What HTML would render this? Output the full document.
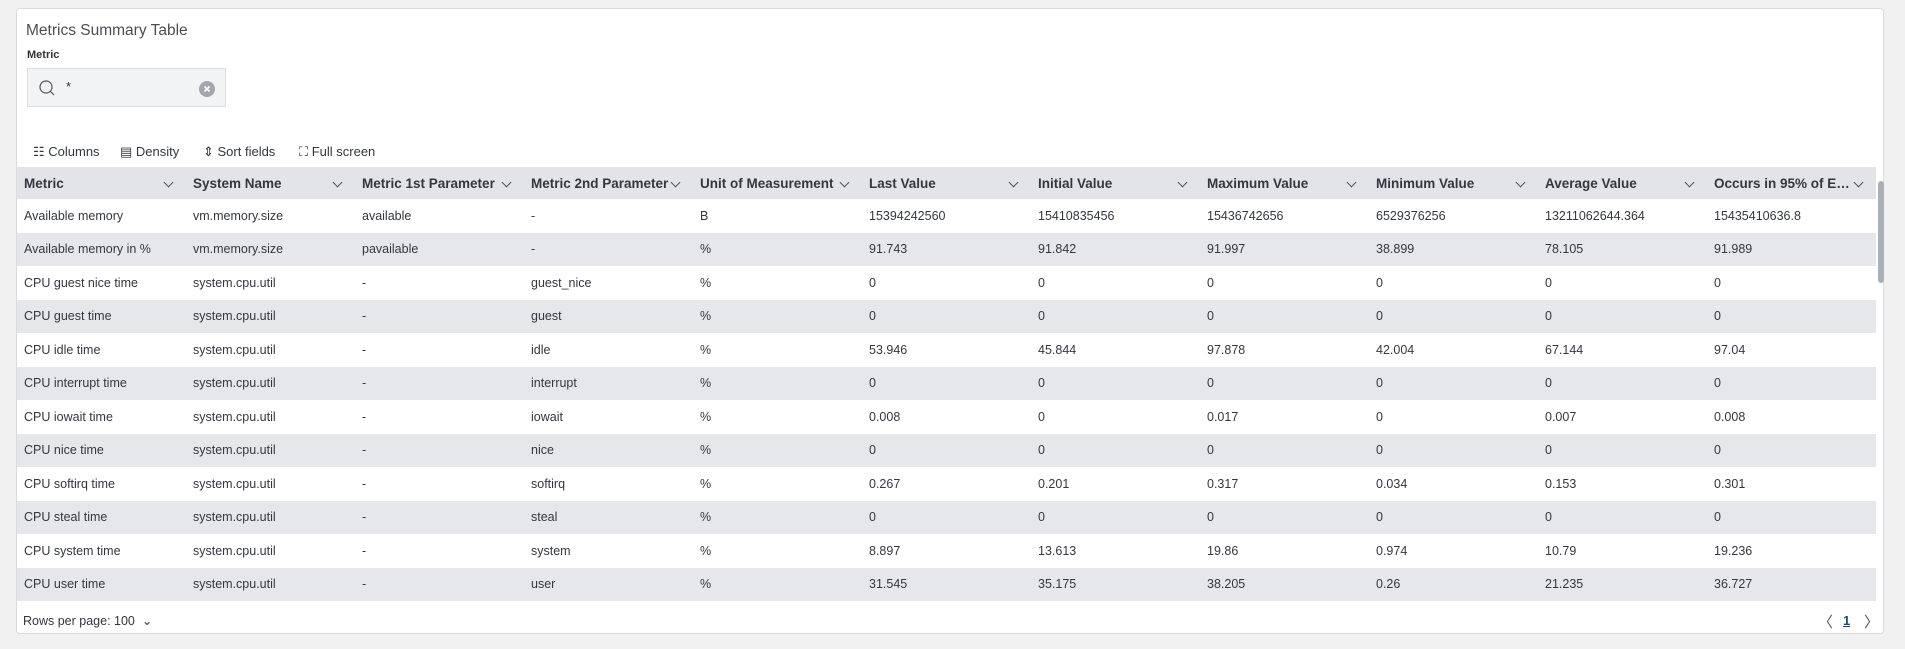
<!DOCTYPE html><html><head><style>
body{margin:0;width:1905px;height:649px;background:#f1f1f2;font-family:"Liberation Sans",sans-serif;color:#343741;overflow:hidden}
.card{position:absolute;left:16px;top:8px;width:1868px;height:626px;background:#fff;border:1px solid #d9dbe0;border-radius:4px;box-sizing:border-box}
.title{position:absolute;left:9px;top:13px;font-size:15.5px;color:#4a4d55}
.lbl{position:absolute;left:10px;top:40px;font-size:11px;font-weight:bold;color:#333}
.inp{position:absolute;left:10px;top:59px;width:199px;height:39px;background:#f2f3f5;border:1px solid #dcdde0;box-sizing:border-box}
.tb{position:absolute;top:135px;font-size:13px;color:#343741}
.tbl{position:absolute;left:0;top:158px;width:1859px}
.row{height:33.5px;display:flex;font-size:12.5px;align-items:center}
.row.h{height:32px;background:#e3e4e8;font-weight:bold;font-size:13.5px}
.row:nth-child(odd):not(.h){background:#e6e7ea}
.c{width:169px;box-sizing:border-box;padding-left:7px;position:relative;white-space:nowrap;overflow:hidden}
.h .c{padding-right:22px;text-overflow:ellipsis}
.h .c:after{content:"";position:absolute;right:14px;top:3px;width:6px;height:6px;border-right:1px solid #555;border-bottom:1px solid #555;transform:rotate(45deg)}
.sb{position:absolute;left:1861px;top:172px;width:6px;height:102px;background:#aab0b8;border-radius:3px}
.foot{position:absolute;left:6px;top:604px;font-size:12.5px}
</style></head><body><div class="card">
<div class="title">Metrics Summary Table</div>
<div class="lbl">Metric</div>
<div class="inp"><svg style="position:absolute;left:10px;top:10px" width="18" height="18"><circle cx="8" cy="8" r="6" fill="none" stroke="#555" stroke-width="1.2"/><line x1="12" y1="12" x2="16" y2="16" stroke="#555" stroke-width="1.2"/></svg><span style="position:absolute;left:38px;top:10px;font-size:13px">*</span><svg style="position:absolute;left:171px;top:12px" width="16" height="16"><circle cx="8" cy="8" r="8" fill="#a2a6ad"/><path d="M5.5 5.5l5 5M10.5 5.5l-5 5" stroke="#fff" stroke-width="1.6"/></svg></div>
<div class="tb" style="left:16px">☷ Columns</div>
<div class="tb" style="left:103px">▤ Density</div>
<div class="tb" style="left:186px">⇕ Sort fields</div>
<div class="tb" style="left:282px">⛶ Full screen</div>
<div class="tbl">
<div class="row h"><div class="c">Metric</div><div class="c">System Name</div><div class="c">Metric 1st Parameter</div><div class="c">Metric 2nd Parameter</div><div class="c">Unit of Measurement</div><div class="c">Last Value</div><div class="c">Initial Value</div><div class="c">Maximum Value</div><div class="c">Minimum Value</div><div class="c">Average Value</div><div class="c">Occurs in 95% of Events</div></div>
<div class="row"><div class="c">Available memory</div><div class="c">vm.memory.size</div><div class="c">available</div><div class="c">-</div><div class="c">B</div><div class="c">15394242560</div><div class="c">15410835456</div><div class="c">15436742656</div><div class="c">6529376256</div><div class="c">13211062644.364</div><div class="c">15435410636.8</div></div>
<div class="row"><div class="c">Available memory in %</div><div class="c">vm.memory.size</div><div class="c">pavailable</div><div class="c">-</div><div class="c">%</div><div class="c">91.743</div><div class="c">91.842</div><div class="c">91.997</div><div class="c">38.899</div><div class="c">78.105</div><div class="c">91.989</div></div>
<div class="row"><div class="c">CPU guest nice time</div><div class="c">system.cpu.util</div><div class="c">-</div><div class="c">guest_nice</div><div class="c">%</div><div class="c">0</div><div class="c">0</div><div class="c">0</div><div class="c">0</div><div class="c">0</div><div class="c">0</div></div>
<div class="row"><div class="c">CPU guest time</div><div class="c">system.cpu.util</div><div class="c">-</div><div class="c">guest</div><div class="c">%</div><div class="c">0</div><div class="c">0</div><div class="c">0</div><div class="c">0</div><div class="c">0</div><div class="c">0</div></div>
<div class="row"><div class="c">CPU idle time</div><div class="c">system.cpu.util</div><div class="c">-</div><div class="c">idle</div><div class="c">%</div><div class="c">53.946</div><div class="c">45.844</div><div class="c">97.878</div><div class="c">42.004</div><div class="c">67.144</div><div class="c">97.04</div></div>
<div class="row"><div class="c">CPU interrupt time</div><div class="c">system.cpu.util</div><div class="c">-</div><div class="c">interrupt</div><div class="c">%</div><div class="c">0</div><div class="c">0</div><div class="c">0</div><div class="c">0</div><div class="c">0</div><div class="c">0</div></div>
<div class="row"><div class="c">CPU iowait time</div><div class="c">system.cpu.util</div><div class="c">-</div><div class="c">iowait</div><div class="c">%</div><div class="c">0.008</div><div class="c">0</div><div class="c">0.017</div><div class="c">0</div><div class="c">0.007</div><div class="c">0.008</div></div>
<div class="row"><div class="c">CPU nice time</div><div class="c">system.cpu.util</div><div class="c">-</div><div class="c">nice</div><div class="c">%</div><div class="c">0</div><div class="c">0</div><div class="c">0</div><div class="c">0</div><div class="c">0</div><div class="c">0</div></div>
<div class="row"><div class="c">CPU softirq time</div><div class="c">system.cpu.util</div><div class="c">-</div><div class="c">softirq</div><div class="c">%</div><div class="c">0.267</div><div class="c">0.201</div><div class="c">0.317</div><div class="c">0.034</div><div class="c">0.153</div><div class="c">0.301</div></div>
<div class="row"><div class="c">CPU steal time</div><div class="c">system.cpu.util</div><div class="c">-</div><div class="c">steal</div><div class="c">%</div><div class="c">0</div><div class="c">0</div><div class="c">0</div><div class="c">0</div><div class="c">0</div><div class="c">0</div></div>
<div class="row"><div class="c">CPU system time</div><div class="c">system.cpu.util</div><div class="c">-</div><div class="c">system</div><div class="c">%</div><div class="c">8.897</div><div class="c">13.613</div><div class="c">19.86</div><div class="c">0.974</div><div class="c">10.79</div><div class="c">19.236</div></div>
<div class="row"><div class="c">CPU user time</div><div class="c">system.cpu.util</div><div class="c">-</div><div class="c">user</div><div class="c">%</div><div class="c">31.545</div><div class="c">35.175</div><div class="c">38.205</div><div class="c">0.26</div><div class="c">21.235</div><div class="c">36.727</div></div>
</div>
<div class="sb"></div>
<div class="foot">Rows per page: 100 &nbsp;⌄</div>
<div style="position:absolute;left:1801px;top:602px;font-size:15px;color:#555">〈</div>
<div style="position:absolute;left:1826px;top:604px;font-size:13px;color:#1a4a7a;text-decoration:underline;font-weight:bold">1</div>
<div style="position:absolute;left:1847px;top:602px;font-size:15px;color:#555">〉</div>
</div></body></html>
